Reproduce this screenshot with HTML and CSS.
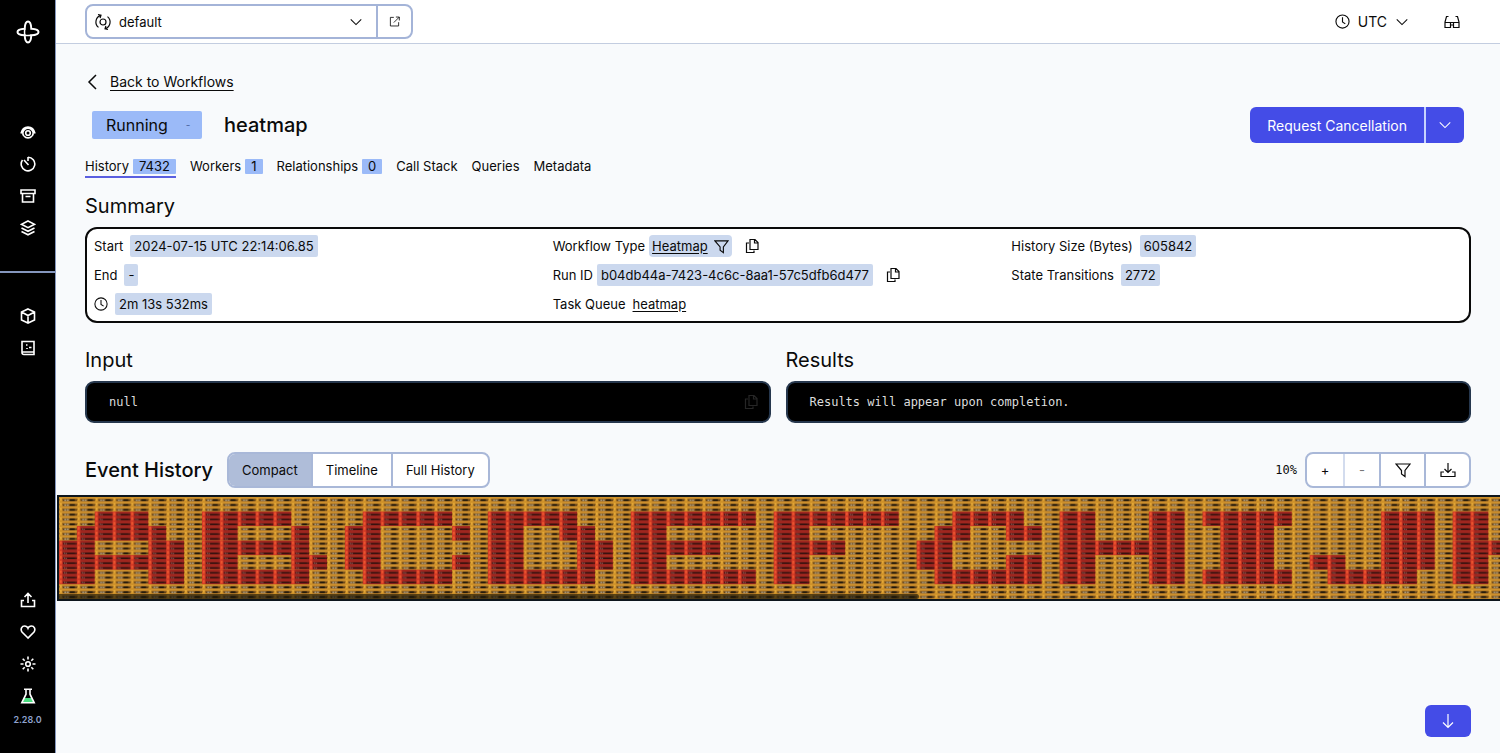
FILE: index.html
```
<!DOCTYPE html>
<html lang="en">
<head>
<meta charset="utf-8">
<title>heatmap | Workflow</title>
<link rel="stylesheet" href="styles.css">
</head>
<body>
<svg class="defs" aria-hidden="true">
  <symbol id="i-copy" viewBox="0 0 16 16"><path d="M6 1.500h5l3 3v7H6zM5 5H2.500v9.500h7.500V12.500M10.500 1.500V5H14"/></symbol>
  <symbol id="i-clock" viewBox="0 0 16 16"><circle cx="8" cy="8" r="7"/><path d="M8 3.500V8.500l3 2"/></symbol>
  <symbol id="i-down" viewBox="0 0 16 16"><path d="M2 5l6 6 6-6"/></symbol>
  <symbol id="i-filter" viewBox="0 0 16 16"><path d="M1 2h14l-5 6.500v6L6.500 12V8.500z"/></symbol>
</svg>
<div class="app">
  <nav class="sidebar" aria-label="Main">
    <a class="logo" href="#" aria-label="Home"><svg viewBox="0 0 24 24"><path d="M8.700 8.700C8.900 4.500 10.300 1.500 12 1.500s3.100 3 3.300 7.200c4.200.200 7.200 1.600 7.200 3.300s-3 3.100-7.200 3.300c-.200 4.200-1.600 7.200-3.300 7.200s-3.100-3-3.300-7.200C4.500 15.100 1.500 13.700 1.500 12s3-3.100 7.200-3.300z"/><path class="thin" d="M8.700 8.700c-.200 2-.200 4.600 0 6.600M8.700 15.300c2 .200 4.600.200 6.600 0"/></svg></a>
    <div class="nav-group nav-main">
      <a href="#" aria-label="Workflows"><svg viewBox="0 0 16 16"><path d="M1 9.500C2 5 5 3 8 3s6 2 7 6.500M3.800 12a5 5 0 1 1 8.400 0"/><circle cx="8" cy="9" r="2.300"/><path d="M4 12c2 2.500 6 2.500 8 0"/></svg></a>
      <a href="#" aria-label="Schedules"><svg viewBox="0 0 16 16"><path d="M8 1v4M8 1.200a6.800 6.800 0 1 1-5.500 2.800M4 4l4.500 5"/></svg></a>
      <a href="#" aria-label="Archive"><svg viewBox="0 0 16 16"><path d="M1 2h14v3.500H1zM2.500 5.500V14h11V5.500M5.500 8.500h5"/></svg></a>
      <a href="#" aria-label="Batch"><svg viewBox="0 0 16 16"><path d="M8 1l6.500 3.300L8 7.600 1.500 4.300zM1.500 8L8 11.300 14.500 8M1.500 11.500L8 14.800l6.500-3.300"/></svg></a>
    </div>
    <div class="nav-group nav-second">
      <a href="#" aria-label="Namespaces"><svg viewBox="0 0 16 16"><path d="M8 1l6.500 3v8L8 15l-6.500-3V4zM1.500 4L8 7.500 14.500 4M8 7.500V15"/></svg></a>
      <a href="#" aria-label="Docs"><svg viewBox="0 0 16 16"><path d="M2 1.500h12v13H4a2 2 0 0 1-2-2zM2 12h12M6 5h1.500M9 7.500h2.500M7 8v1"/></svg></a>
    </div>
    <div class="nav-group nav-foot">
      <a href="#" aria-label="Import"><svg viewBox="0 0 16 16"><path d="M8 11V1.500M4.500 5L8 1.500 11.500 5M4 8.500H1.500v6h13v-6H12"/></svg></a>
      <a href="#" aria-label="Feedback"><svg viewBox="0 0 16 16"><path d="M8 14L2 8C0 5 2 2 4.500 2 6 2 7.500 3 8 4.300 8.500 3 10 2 11.500 2 14 2 16 5 14 8z"/></svg></a>
      <a href="#" aria-label="Theme"><svg viewBox="0 0 16 16"><circle cx="8" cy="8" r="2.300"/><path d="M8 .500v3M8 12.500v3M.500 8h3M12.500 8h3M2.700 2.700l2 2M11.300 11.300l2 2M2.700 13.300l2-2M11.300 4.700l2-2"/></svg></a>
      <a href="#" aria-label="Labs"><svg viewBox="0 0 16 16"><path class="liquid" d="M4.500 10h7l2 4.500h-11z"/><path d="M4 1.200h8M6 1.200v5L1.800 14.800h12.400L10 6.200v-5"/></svg></a>
      <span class="version">2.28.0</span>
    </div>
  </nav>

  <div class="page">
    <header class="topbar">
      <div class="namespace">
        <svg class="ns-icon" viewBox="0 0 18 18"><circle cx="9" cy="9" r="3"/><path d="M6.500 2.400A7 7 0 0 0 4.500 14.400M11.500 15.600A7 7 0 0 0 13.500 3.600M4 1.500l3 .700-.900 3M14 16.500l-3-.700.900-3"/></svg>
        <select aria-label="Namespace"><option>default</option></select>
        <svg class="ns-arrow"><use href="#i-down"/></svg>
        <button class="ns-open" aria-label="Open namespace"><svg viewBox="0 0 16 16"><path d="M7 2H2v12.500h12V9M10 1.500h5v5M15 1.500L7 9.500"/></svg></button>
      </div>
      <div class="top-actions">
        <button class="tz"><svg><use href="#i-clock"/></svg><span>UTC</span><svg class="tz-arrow"><use href="#i-down"/></svg></button>
        <button class="glasses" aria-label="Labs mode"><svg viewBox="0 0 16 16"><path d="M4.500 2.500H2.500L1 8v5.500h5.500V8.500M9.500 8.500v5H15V8l-1.500-5.500h-2M1 8.500h14M6.500 11h3"/></svg></button>
      </div>
    </header>

    <main>
      <div class="inner">
        <a class="back" href="#"><svg viewBox="0 0 16 16"><path d="M11 1L4 8l7 7"/></svg><span>Back to Workflows</span></a>
        <div class="title-row">
          <span class="status">Running<i>-</i></span>
          <h1>heatmap</h1>
          <div class="cancel"><button>Request Cancellation</button><button class="more" aria-label="More actions"><svg><use href="#i-down"/></svg></button></div>
        </div>
        <nav class="tabs" aria-label="Workflow">
          <a class="active" href="#">History<b>7432</b></a>
          <a href="#">Workers<b>1</b></a>
          <a href="#">Relationships<b>0</b></a>
          <a href="#">Call Stack</a>
          <a href="#">Queries</a>
          <a href="#">Metadata</a>
        </nav>

        <h2 class="summary-title">Summary</h2>
        <section class="summary">
          <div class="col">
            <p>Start <span class="chip">2024-07-15 UTC 22:14:06.85</span></p>
            <p>End <span class="chip">-</span></p>
            <p><svg class="clock"><use href="#i-clock"/></svg><span class="chip">2m 13s 532ms</span></p>
          </div>
          <div class="col narrow">
            <p>Workflow Type <span class="chip linked"><a href="#">Heatmap</a><svg><use href="#i-filter"/></svg></span><button class="copy" aria-label="Copy workflow type"><svg><use href="#i-copy"/></svg></button></p>
            <p>Run ID <span class="chip">b04db44a-7423-4c6c-8aa1-57c5dfb6d477</span><button class="copy" aria-label="Copy run ID"><svg><use href="#i-copy"/></svg></button></p>
            <p>Task Queue <a class="queue" href="#">heatmap</a></p>
          </div>
          <div class="col">
            <p>History Size (Bytes) <span class="chip">605842</span></p>
            <p>State Transitions <span class="chip">2772</span></p>
          </div>
        </section>

        <div class="io">
          <section>
            <h2>Input</h2>
            <div class="code"><code>null</code><button aria-label="Copy input"><svg><use href="#i-copy"/></svg></button></div>
          </section>
          <section>
            <h2>Results</h2>
            <div class="code"><code>Results will appear upon completion.</code></div>
          </section>
        </div>

        <div class="history-head">
          <h2>Event History</h2>
          <div class="group views"><button class="on">Compact</button><button>Timeline</button><button>Full History</button></div>
          <span class="zoom">10%</span>
          <div class="group tools">
            <button aria-label="Zoom in">+</button><button class="off" aria-label="Zoom out" disabled>-</button><button class="wide" aria-label="Filter"><svg><use href="#i-filter"/></svg></button><button class="wide" aria-label="Download"><svg viewBox="0 0 16 16"><path d="M8 1v9.500M4.500 7L8 10.500 11.500 7M4 10H1v4.500h14V10h-3"/></svg></button>
          </div>
        </div>
      </div>

      <div class="timeline">
        <svg id="graph" role="img" aria-label="Event timeline" width="1608" height="102" viewBox="0 0 4824 306">
          <defs>
            <pattern id="amber" width="53.600" height="14.530" patternUnits="userSpaceOnUse">
              <path fill="#b77d29" d="M0 0h54v15H0z"/>
              <path fill="#d0922c" d="M0 0h54v4H0z"/>
              <path fill="#5e3f16" d="M11 7h43v5H11z"/>
              <path fill="#a8987c" d="M16 7h6v5h-6zM24 7h5v5h-5z"/>
              <path fill="#1c150a" d="M33 7h14v5H33z"/>
              <path fill="#cf9229" d="M0 0h10v15H0z"/>
              <path fill="#e4a838" d="M3 3h5v8H3z"/>
              <path fill="#8e601e" d="M0 6h2v4H0zM9 6h2v4H9z"/>
            </pattern>
            <pattern id="red" width="53.600" height="14.530" patternUnits="userSpaceOnUse">
              <path fill="#a0261f" d="M0 0h54v15H0z"/>
              <path fill="#4c1411" d="M12 7h42v5H12z"/>
              <path fill="#2a0f0d" d="M25 8h22v3H25z"/>
              <path fill="#85605a" d="M15 7h3v4h-3zM20 8h3v4h-3z"/>
              <path fill="#d53b26" d="M0 0h10v15H0z"/>
              <path fill="#ee5830" d="M3 3h5v8H3z"/>
            </pattern>
          </defs>
          <rect width="4824" height="306" fill="url(#amber)"/>
          <g id="cells" fill="url(#red)"></g>
        </svg>
        <div class="thumb"></div>
      </div>
      <button class="jump" aria-label="Scroll to bottom"><svg viewBox="0 0 16 16"><path d="M8 1v13.500M3 9.500l5 5 5-5"/></svg></button>
    </main>
  </div>
</div>
<script src="graph.js"></script>
</body>
</html>
```
FILE: styles.css
```
* { box-sizing: border-box; }
body { margin: 0; font-family: Inter, "Liberation Sans", sans-serif; font-size: 13px; color: #0a0a0a; }
h1, h2, p { margin: 0; font-weight: 400; }
a { color: inherit; text-decoration: none; }
button { font: inherit; color: inherit; background: none; border: 0; padding: 0; display: inline-flex; align-items: center; justify-content: center; }
svg { width: 16px; height: 16px; flex: none; fill: none; stroke: currentColor; stroke-width: 1.2; display: block; }
.defs { position: absolute; width: 0; height: 0; }
.app { display: flex; min-height: 100vh; }

.sidebar { width: 56px; flex: none; background: #000; color: #fff; border-right: 1px solid #8496bd; display: flex; flex-direction: column; align-items: center; padding: 20px 0 25px; }
.sidebar svg { stroke-width: 1.6; }
.logo svg { width: 24px; height: 24px; stroke-width: 2; }
.logo .thin { stroke-width: 1.5; }
.nav-group { display: flex; flex-direction: column; align-items: center; gap: 16px; width: 100%; }
.nav-main { padding: 80px 0 35px; border-bottom: 2px solid #8496bd; }
.nav-second { padding-top: 35px; }
.nav-foot { margin-top: auto; }
.liquid { fill: #4ade80; stroke: none; }
.version { font-size: 9px; line-height: 16px; margin-top: -8px; font-weight: 600; color: #8fa3cf; }

.page { flex: 1; min-width: 0; display: flex; flex-direction: column; background: #f8fafc; }
.topbar { height: 44px; background: #fff; border-bottom: 1px solid #c3cde0; display: flex; align-items: center; justify-content: space-between; padding: 0 40px 0 29px; }
.namespace { display: flex; align-items: center; width: 328px; height: 35px; border: 2px solid #a4b4d8; border-radius: 8px; padding-left: 7px; }
.ns-icon { width: 18px; height: 18px; }
.namespace select { appearance: none; border: 0; background: none; font: inherit; color: inherit; flex: 1; padding: 0 0 0 7px; }
.ns-arrow { width: 14px; height: 14px; margin-right: 13px; }
.ns-open { width: 35px; height: 100%; border-left: 2px solid #a4b4d8; }
.ns-open svg { width: 11px; height: 11px; }
.top-actions { display: flex; align-items: center; gap: 35px; }
.tz { gap: 8px; font-size: 14px; }
.tz svg { width: 15px; height: 15px; }
.tz .tz-arrow { width: 14px; height: 14px; }

main { flex: 1; display: flex; flex-direction: column; padding: 28px 0 16px; }
.inner { padding: 0 29px; }
.back { display: inline-flex; align-items: center; gap: 9px; font-size: 14px; line-height: 20px; }
.back span { text-decoration: underline; text-underline-offset: 3px; }
.back svg { stroke-width: 1.5; }
.title-row { display: flex; align-items: center; height: 36px; margin-top: 14px; padding: 0 7px; }
.status { display: flex; width: 110px; height: 28px; align-items: center; padding-left: 14px; background: #9bbaf8; border-radius: 2px; font-size: 16px; }
.status i { font-size: 10px; font-style: normal; margin-left: 18px; color: #4a65a0; }
h1 { font-size: 20px; font-weight: 500; margin-left: 22px; }
.cancel { display: flex; height: 36px; margin-left: auto; border-radius: 6px; overflow: hidden; background: #444ce7; color: #fff; font-size: 14px; }
.cancel button { padding: 0 17px; }
.cancel .more { width: 40px; padding: 0; border-left: 2px solid #c7d2fe; }
.cancel .more svg { width: 14px; height: 14px; }
.tabs { display: flex; gap: 14px; margin-top: 15px; line-height: 17px; }
.tabs a { padding-bottom: 1px; border-bottom: 2px solid transparent; }
.tabs .active { border-color: #5a5fe0; }
.tabs b { display: inline-block; font-weight: 400; line-height: 15px; padding: 0 6px; margin-left: 4px; background: #9bbaf8; border-radius: 1px; }

h2 { font-size: 20px; line-height: 24px; }
.summary-title { margin-top: 16px; }
.summary { margin-top: 9px; display: grid; grid-template-columns: repeat(3, 1fr); column-gap: 8px; border: 2px solid #0a0a0a; border-radius: 12px; background: #fff; padding: 3px 7px; }
.summary .col { display: flex; flex-direction: column; }
.summary p { display: flex; align-items: center; gap: 7px; height: 28px; }
.summary p + p { margin-top: 1px; }
.summary .narrow p { gap: 4px; }
.chip { background: #cbd8ee; border-radius: 2px; padding: 0 4px; line-height: 22px; }
.clock { width: 14px; height: 14px; }
.linked { display: flex; align-items: center; gap: 6px; padding: 0 3px; border-radius: 4px; }
.linked a, .queue { text-decoration: underline; text-underline-offset: 2px; }
.linked svg { width: 15px; height: 15px; }
.queue { margin-left: 3px; }
.copy { margin-left: 8px; }

.io { display: grid; grid-template-columns: 1fr 1fr; gap: 15px; margin-top: 25px; }
.code { height: 42px; margin-top: 9px; display: flex; align-items: center; justify-content: space-between; background: #000; border: 2px solid #26374d; border-radius: 9px; padding: 0 10px 0 22px; color: #ddd; }
code, .zoom { font-family: "DejaVu Sans Mono", monospace; font-size: 12px; }
.code button { color: #262626; }

.history-head { display: flex; align-items: center; margin-top: 29px; }
.history-head h2 { font-weight: 500; margin-right: 14px; }
.group { display: flex; height: 36px; border: 2px solid #a9b8d8; border-radius: 8px; background: #fff; overflow: hidden; }
.group button { padding: 0 13px; }
.group button + button { border-left: 2px solid #a9b8d8; }
.group .on { background: #afbdd9; }
.zoom { margin: 0 8px 0 auto; }
.tools button { width: 36px; padding: 0; }
.tools .off { color: #777; border-color: #d3dcee; }
.tools .wide { width: 45px; }

.timeline { margin: 7px 0 0 1px; border: 2px solid #0d151c; border-right: 0; background: #0d151c; height: 106px; overflow: hidden; position: relative; }
#graph { width: 1608px; height: 102px; stroke: none; }
.thumb { position: absolute; left: 0; bottom: 0; width: 59.7%; height: 5px; background: rgba(20, 18, 8, .65); border-radius: 0 3px 3px 0; }
.jump { width: 46px; height: 32px; margin: auto 29px 0 auto; border-radius: 6px; background: #444ce7; color: #fff; }
```
FILE: graph.js
```
// Each row lists [first, last] column spans of failed events.
const rows = [
  [[2,4],[8,12],[17,21],[24,28],[32,38],[40,46],[50,53],[56,57],[61,62],[64,68],[74,76],[78,79],[83,84]],
  [[1,5],[8,9],[13,13],[16,17],[22,22],[24,25],[28,29],[32,33],[40,41],[49,50],[53,54],[56,57],[61,62],[65,67],[74,76],[78,79],[82,83]],
  [[0,1],[5,6],[8,13],[16,17],[24,25],[29,30],[32,36],[40,43],[48,49],[56,62],[65,67],[74,76],[78,82]],
  [[0,6],[8,9],[13,14],[16,17],[22,22],[24,25],[29,30],[32,33],[40,41],[48,49],[53,54],[56,57],[61,62],[65,67],[70,71],[74,76],[78,79],[82,83]],
  [[0,1],[5,6],[8,13],[17,21],[24,29],[32,38],[40,41],[49,54],[56,57],[61,62],[64,68],[71,75],[78,79],[83,84]]
];
const cells = document.getElementById("cells");
rows.forEach((spans, r) => {
  for (const [from, to] of spans) {
    const rect = document.createElementNS("http://www.w3.org/2000/svg", "rect");
    rect.setAttribute("x", from * 53.6);
    rect.setAttribute("y", (r + 1) * 43.59);
    rect.setAttribute("width", (to - from + 1) * 53.6);
    rect.setAttribute("height", 43.59);
    cells.appendChild(rect);
  }
});
```
